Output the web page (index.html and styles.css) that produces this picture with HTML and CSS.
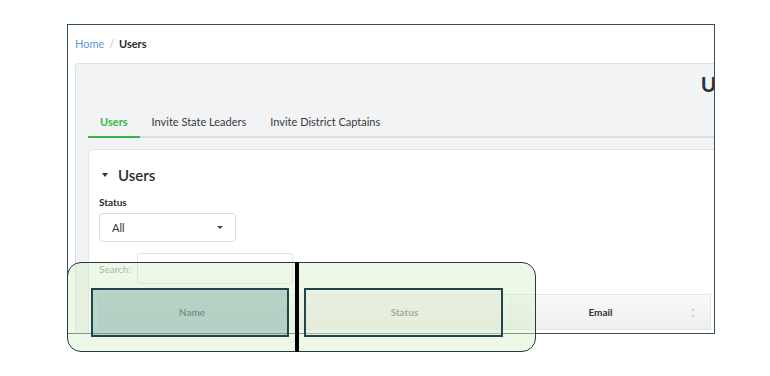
FILE: index.html
```html
<!DOCTYPE html>
<html lang="en">
<head>
    <meta charset="UTF-8">
    <title>Users</title>
    <link rel="stylesheet" href="styles.css">
</head>
<body>
    <div class="stage">
        <!-- Screenshot frame -->
        <div class="frame">
            <nav class="crumbs">
                <a href="#">Home</a>
                <span class="sep">/</span>
                <span class="current">Users</span>
            </nav>

            <section class="panel">
                <h1 class="page-title">Users</h1>

                <ul class="tabs">
                    <li class="tab active">Users</li>
                    <li class="tab">Invite State Leaders</li>
                    <li class="tab">Invite District Captains</li>
                </ul>

                <div class="card">
                    <h2 class="card-title"><span class="caret"></span>Users</h2>

                    <label class="field-label">Status</label>
                    <div class="select">
                        <span>All</span>
                        <span class="select-caret"></span>
                    </div>

                    <div class="search-row">
                        <label>Search:</label>
                        <div class="search-input"></div>
                    </div>

                    <div class="grid-head">
                        <div class="th col-name sortable">Name<span class="sort"></span></div>
                        <div class="th col-status">Status</div>
                        <div class="th col-email sortable">Email<span class="sort"></span></div>
                    </div>
                </div>
            </section>
        </div>

        <!-- Annotation overlays -->
        <div class="note-box"></div>
        <div class="note-rect note-name"></div>
        <div class="note-rect note-status"></div>
        <div class="note-divider"></div>
    </div>
</body>
</html>
```

FILE: styles.css
```css
/* Base */
body {
    margin: 0;
    background: #fff;
    font-family: Lato, "Open Sans", sans-serif;
    color: #333;
}

.stage {
    position: relative;
    width: 770px;
    height: 376px;
    padding: 24px 0 0 67px;
    box-sizing: border-box;
    overflow: hidden;
}

.frame {
    width: 648px;
    height: 310px;
    box-sizing: border-box;
    border: 1px solid #34505c;
    background: #fff;
    overflow: hidden;
}

/* Breadcrumb */
.crumbs {
    padding: 12px 0 0 7px;
    font-size: 11px;
    line-height: 14px;
    height: 26px;
}

.crumbs a {
    color: #5a9ad8;
    text-decoration: none;
}

.crumbs .sep {
    color: #c4c4c4;
    margin: 0 2px;
}

.crumbs .current {
    font-weight: 700;
    color: #2c2c2c;
}

/* Page panel */
.panel {
    margin-left: 7px;
    width: 1300px;
    background: #f2f3f5;
    border: 1px solid #dedfe1;
    border-radius: 3px;
    padding: 0 12px;
    box-sizing: border-box;
    height: 400px;
}

.page-title {
    margin: 6px 0 0 4px;
    font-size: 21px;
    line-height: 28px;
    font-weight: 700;
    text-align: center;
    color: #26323c;
}

.tabs {
    list-style: none;
    margin: 10px 0 0;
    padding: 0;
    display: flex;
    border-bottom: 2px solid #dcdddf;
}

.tab {
    padding: 7px 12px;
    font-size: 11px;
    line-height: 14px;
    color: #3a3a3a;
    margin-bottom: -2px;
    border-bottom: 2px solid transparent;
}

.tab.active {
    color: #3cb64a;
    font-weight: 700;
    border-bottom-color: #3cb64a;
}

/* Card */
.card {
    margin-top: 11px;
    background: #fff;
    border: 1px solid #e4e5e7;
    border-radius: 4px;
    padding: 15px 10px;
}

.card-title {
    margin: 0 0 10px;
    font-size: 15px;
    line-height: 20px;
    font-weight: 600;
    display: flex;
    align-items: center;
    color: #2b2b2b;
}

.caret {
    width: 0;
    height: 0;
    border-left: 3.5px solid transparent;
    border-right: 3.5px solid transparent;
    border-top: 4px solid #333;
    margin: 0 10px 0 3px;
}

.field-label {
    display: block;
    font-size: 10px;
    line-height: 14px;
    font-weight: 700;
    color: #2b2b2b;
}

.select {
    margin-top: 4px;
    width: 137px;
    height: 29px;
    box-sizing: border-box;
    border: 1px solid #dcdcdc;
    border-radius: 4px;
    padding: 0 12px;
    display: flex;
    align-items: center;
    justify-content: space-between;
    font-size: 11px;
    color: #333;
}

.select-caret {
    width: 0;
    height: 0;
    border-left: 3px solid transparent;
    border-right: 3px solid transparent;
    border-top: 3px solid #444;
}

.search-row {
    margin-top: 11px;
    display: flex;
    align-items: center;
    gap: 6px;
    font-size: 10px;
    color: #8a8a8a;
}

.search-input {
    width: 156px;
    height: 31px;
    box-sizing: border-box;
    border: 1px solid #e2e2e2;
    border-radius: 3px;
}

/* Table header */
.grid-head {
    margin-top: 10px;
    display: flex;
    width: 612px;
}

.th {
    position: relative;
    box-sizing: border-box;
    height: 36px;
    display: flex;
    align-items: center;
    justify-content: center;
    font-size: 10px;
    font-weight: 700;
    color: #333;
    background: linear-gradient(#f9f9f9, #efefef);
    border: 1px solid #e6e6e6;
    border-left: none;
}

.col-name { width: 206px; padding-right: 20px; border-left: 1px solid #e6e6e6; }
.col-status { width: 206px; padding-right: 6px; }
.col-email { width: 200px; padding-right: 20px; }

.sort {
    position: absolute;
    right: 14px;
    top: 13px;
    width: 5px;
    height: 10px;
}

.sort::before,
.sort::after {
    content: "";
    position: absolute;
    left: 0;
    border-left: 2.5px solid transparent;
    border-right: 2.5px solid transparent;
}

.sort::before {
    top: 0;
    border-bottom: 3px solid #d4d4d4;
}

.sort::after {
    bottom: 0;
    border-top: 3px solid #d4d4d4;
}

/* Annotation overlays */
.note-box {
    position: absolute;
    left: 67px;
    top: 262px;
    width: 469px;
    height: 90px;
    box-sizing: border-box;
    border: 1.5px solid #1f3c46;
    border-radius: 14px;
    background: rgba(215, 240, 200, 0.45);
}

.note-rect {
    position: absolute;
    top: 288px;
    height: 49px;
    box-sizing: border-box;
    border: 2px solid #24434c;
}

.note-name {
    left: 91px;
    width: 198px;
    background: rgba(110, 165, 160, 0.42);
}

.note-status {
    left: 304px;
    width: 199px;
    background: rgba(228, 232, 218, 0.35);
}

.note-divider {
    position: absolute;
    left: 295px;
    top: 262px;
    width: 4px;
    height: 90px;
    background: #000;
}
```
